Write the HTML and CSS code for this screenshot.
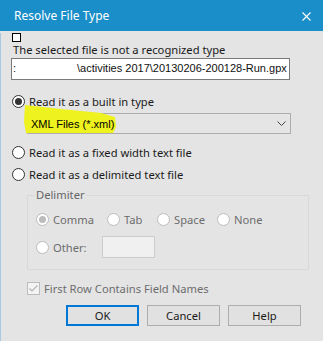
FILE: index.html
```html
<!DOCTYPE html>
<html lang="en">

<head>
    <meta charset="utf-8">
    <meta name="viewport" content="width=device-width, initial-scale=1.0">
    <title>Resolve File Type</title>
    <link rel="stylesheet" href="styles.css">
</head>

<body>
    <div class="window">
        <header class="titlebar">
            <span class="title">Resolve File Type</span>
            <svg class="close" width="9" height="9" viewBox="0 0 9 9">
                <path d="M0.5 0.5 L8.5 8.5 M8.5 0.5 L0.5 8.5" stroke="#fff" stroke-width="1.1" fill="none" />
            </svg>
        </header>
        <main class="body">
            <div class="mini_check"></div>
            <p class="notice">The selected file is not a recognized type</p>
            <div class="path"><span class="cut">:</span><span class="blank"></span>\activities 2017\20130206-200128-Run.gpx</div>

            <div class="radio_row">
                <span class="radio checked"></span>
                <span>Read it as a built in type</span>
            </div>
            <div class="select">
                <div class="marker"></div>
                <span class="select_text">XML Files (*.xml)</span>
                <svg class="chevron" width="9" height="5" viewBox="0 0 9 5">
                    <path d="M0.5 0.5 L4.5 4.5 L8.5 0.5" stroke="#444" stroke-width="1" fill="none" />
                </svg>
            </div>
            <div class="radio_row second">
                <span class="radio"></span>
                <span>Read it as a fixed width text file</span>
            </div>
            <div class="radio_row third">
                <span class="radio"></span>
                <span>Read it as a delimited text file</span>
            </div>

            <fieldset class="group">
                <legend>Delimiter</legend>
                <div class="delims">
                    <div class="opt"><span class="radio off checked"></span>Comma</div>
                    <div class="opt"><span class="radio off"></span>Tab</div>
                    <div class="opt"><span class="radio off"></span>Space</div>
                    <div class="opt"><span class="radio off"></span>None</div>
                </div>
                <div class="other_row">
                    <div class="opt other"><span class="radio off"></span>Other:</div>
                    <div class="other_box"></div>
                </div>
            </fieldset>

            <div class="check_row">
                <span class="check">
                    <svg width="11" height="11" viewBox="0 0 11 11">
                        <path d="M1.5 5.5 L4 8 L9.5 2.5" stroke="#b4b4b4" stroke-width="1.2" fill="none" />
                    </svg>
                </span>
                <span>First Row Contains Field Names</span>
            </div>

            <div class="buttons">
                <button class="btn default">OK</button>
                <button class="btn">Cancel</button>
                <button class="btn">Help</button>
            </div>
        </main>
    </div>
</body>

</html>
```
FILE: styles.css
```css
* {
    box-sizing: border-box;
}

body {
    margin: 0;
    font-family: 'Noto Sans', 'Open Sans', sans-serif;
    font-size: 11.2px;
    color: #1a1a1a;
}

.window {
    width: 323px;
    height: 341px;
    background: #e4e4e4;
    overflow: hidden;
}

.titlebar {
    height: 31px;
    background: #1a8ec8;
    display: flex;
    align-items: center;
    justify-content: space-between;
    padding: 0 12px 0 14px;
    color: white;
}

.title {
    font-size: 12px;
}

.close {
    display: block;
    margin-top: 1px;
}

.body {
    height: 310px;
    border-left: 1px solid #a9c9e3;
    padding-left: 10px;
}

.mini_check {
    width: 9px;
    height: 9px;
    margin: 2px 0 0 1px;
    border: 1px solid #000;
    background: white;
}

.notice {
    margin: 0 0 0 2px;
    line-height: 16px;
    height: 15px;
    color: #1a1a1a;
}

.path {
    width: 279px;
    height: 22px;
    margin-top: 1px;
    border: 1px solid #7a7a7a;
    background: white;
    font-family: 'Liberation Sans', Arial, sans-serif;
    font-size: 11px;
    line-height: 18px;
    padding-left: 1px;
    white-space: nowrap;
    overflow: hidden;
    color: #111;
}

.cut {
    display: inline-block;
    width: 2px;
}

.blank {
    display: inline-block;
    width: 62px;
}

.radio_row {
    display: flex;
    align-items: center;
    gap: 4px;
    height: 16px;
    margin: 13px 0 0 1px;
}

.radio_row.second {
    margin-top: 10px;
}

.radio_row.third {
    margin-top: 6px;
}

.radio {
    position: relative;
    width: 13px;
    height: 13px;
    border: 1px solid #333;
    border-radius: 50%;
    background: white;
    flex: none;
}

.radio.checked::after {
    content: "";
    position: absolute;
    left: 2px;
    top: 2px;
    width: 7px;
    height: 7px;
    border-radius: 50%;
    background: #333;
}

.radio.off {
    border-color: #bcbcbc;
}

.radio.off.checked::after {
    background: #bcbcbc;
}

.select {
    position: relative;
    width: 264px;
    height: 21px;
    margin: 4px 0 0 16px;
    border: 1px solid #adadad;
    background: #e5e5e5;
    display: flex;
    align-items: center;
    justify-content: space-between;
    padding: 0 4px 0 3px;
}

.marker {
    position: absolute;
    left: -4px;
    top: -9px;
    width: 93px;
    height: 29px;
    background: #eef21e;
    clip-path: polygon(1px 0, 37px 4px, 77px 8px, 91px 12px, 92px 22px, 89px 28px, 2px 28px, 0 17px);
}

.select_text {
    position: relative;
    font-family: 'Liberation Sans', Arial, sans-serif;
    font-size: 11px;
    color: #000;
}

.chevron {
    display: block;
}

.group {
    margin: 5px 0 0 16px;
    width: 282px;
    height: 83px;
    border: 1px solid #d9d9d9;
    padding: 0 0 0 8px;
}

.group legend {
    padding: 0 1px;
    margin-left: -1px;
    line-height: 16px;
    color: #666;
}

.delims {
    display: grid;
    grid-template-columns: 71px 50px 60px auto;
    height: 16px;
    margin-top: 8px;
}

.opt {
    display: flex;
    align-items: center;
    gap: 4px;
    color: #6d6d6d;
}

.other_row {
    display: flex;
    align-items: center;
    margin-top: 9px;
}

.other {
    width: 66px;
}

.other_box {
    width: 53px;
    height: 22px;
    border: 1px solid #cccccc;
    background: #f0f0f0;
}

.check_row {
    display: flex;
    align-items: center;
    gap: 4px;
    height: 16px;
    margin: 10px 0 0 16px;
    color: #6d6d6d;
}

.check {
    width: 13px;
    height: 13px;
    border: 1px solid #bcbcbc;
    background: #f4f4f4;
    display: flex;
    align-items: center;
    justify-content: center;
}

.check svg {
    display: block;
}

.buttons {
    display: flex;
    gap: 8px;
    margin: 9px 0 0 55px;
}

.btn {
    width: 73px;
    height: 21px;
    border: 1px solid #adadad;
    background: #e1e1e1;
    font-family: 'Noto Sans', 'Open Sans', sans-serif;
    font-size: 11.2px;
    color: #1a1a1a;
    padding: 0;
}

.btn.default {
    border: 2px solid #0078d7;
}
```
